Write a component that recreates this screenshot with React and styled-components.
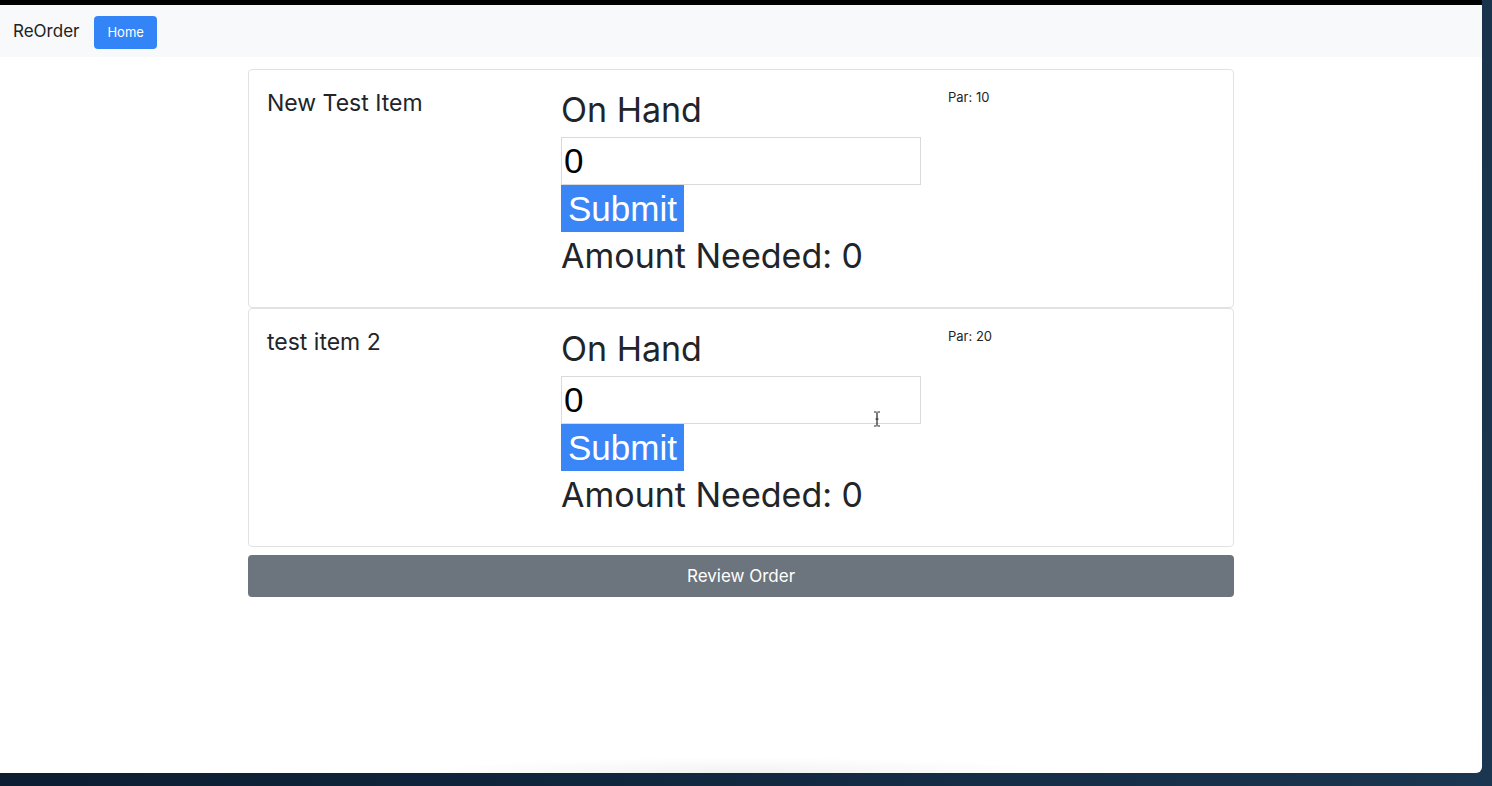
import styled, { createGlobalStyle } from "styled-components";

const GlobalStyle = createGlobalStyle`
  html, body {
    margin: 0;
    padding: 0;
  }
  body {
    background: linear-gradient(100deg, #0b1c2e 0%, #10263d 45%, #1b3650 100%);
    font-family: Inter, "Liberation Sans", Arial, sans-serif;
    color: #212529;
    overflow: hidden;
  }
`;

//styles
const Screen = styled.div`
  width: 1492px;
  height: 786px;
`;
const Window = styled.div`
  width: 1482px;
  height: 768px;
  border-top: 5px solid #000;
  border-bottom-right-radius: 6px;
  background-color: #fff;
  background-image: radial-gradient(320px 16px at 50% 100%, rgba(0, 0, 0, 0.05), transparent);
  display: flex;
  flex-direction: column;
  overflow: hidden;
`;
const Navbar = styled.nav`
  height: 52px;
  background-color: #f8f9fa;
  display: flex;
  align-items: center;
  padding: 0 14px 0 13px;
  gap: 14px;
`;
const Brand = styled.span`
  font-size: 17px;
  color: #222;
  margin-top: -1px;
`;
const NavButton = styled.button`
  height: 33px;
  padding: 0 13px;
  border: none;
  border-radius: 4px;
  background-color: #3384f7;
  color: #fff;
  font-family: inherit;
  font-size: 13px;
  margin-top: 2px;
  margin-left: 1px;
`;
const Container = styled.main`
  width: 986px;
  margin: 12px auto 0;
  display: flex;
  flex-direction: column;
`;
const Card = styled.section`
  height: 239px;
  box-sizing: border-box;
  border: 1px solid #e2e2e2;
  border-radius: 4px;
  padding: 19px 18px;
  display: grid;
  grid-template-columns: 294px 387px 1fr;
  align-items: start;
`;
const ItemName = styled.h4`
  margin: 0;
  font-size: 23px;
  font-weight: 400;
  line-height: 29px;
`;
const Middle = styled.div`
  display: flex;
  flex-direction: column;
  align-items: flex-start;
`;
const Heading = styled.h2`
  margin: 0 0 6px;
  font-size: 34px;
  font-weight: 400;
  line-height: 42px;
`;
const InputWrap = styled.div`
  position: relative;
`;
const CountInput = styled.input`
  width: 360px;
  height: 48px;
  box-sizing: border-box;
  border: 1px solid #dadada;
  padding: 0 2px;
  margin: 0;
  font-family: "Liberation Sans", Arial, sans-serif;
  font-size: 35px;
  color: #000;
  outline: none;
`;
const Cursor = styled.svg`
  position: absolute;
  left: 312px;
  top: 35px;
`;
const SubmitButton = styled.button`
  height: 47px;
  padding: 0 7px;
  border: none;
  border-radius: 0;
  background-color: #3b86f7;
  color: #fff;
  font-family: "Liberation Sans", Arial, sans-serif;
  font-size: 35px;
`;
const Amount = styled.div`
  margin-top: 3px;
  font-size: 34px;
  line-height: 42px;
`;
const Par = styled.span`
  font-size: 13px;
  line-height: 1;
  padding-top: 2px;
`;
const ReviewButton = styled.button`
  margin-top: 8px;
  height: 42px;
  border: none;
  border-radius: 4px;
  background-color: #6c757d;
  color: #fff;
  font-family: inherit;
  font-size: 17px;
`;

const items = [
  { id: 1, title: "New Test Item", par: 10, onHand: 0, needed: 0 },
  { id: 2, title: "test item 2", par: 20, onHand: 0, needed: 0, cursor: true },
];

function ItemCard({ item }) {
  return (
    <Card>
      <ItemName>{item.title}</ItemName>
      <Middle>
        <Heading>On Hand</Heading>
        <InputWrap>
          <CountInput type="number" defaultValue={item.onHand} />
          {item.cursor && (
            <Cursor width="8" height="16" viewBox="0 0 8 16">
              <path d="M1 1h2.5M4.5 1H7M4 1.5v13M1 15h2.5M4.5 15H7M2.5 8h3" stroke="#222" strokeWidth="1.2" fill="none" />
            </Cursor>
          )}
        </InputWrap>
        <SubmitButton>Submit</SubmitButton>
        <Amount>Amount Needed: {item.needed}</Amount>
      </Middle>
      <Par>Par: {item.par}</Par>
    </Card>
  );
}

export default function App() {
  return (
    <Screen>
      <GlobalStyle />
      <Window>
        <Navbar>
          <Brand>ReOrder</Brand>
          <NavButton>Home</NavButton>
        </Navbar>
        <Container>
          {items.map((item) => (
            <ItemCard key={item.id} item={item} />
          ))}
          <ReviewButton>Review Order</ReviewButton>
        </Container>
      </Window>
    </Screen>
  );
}
